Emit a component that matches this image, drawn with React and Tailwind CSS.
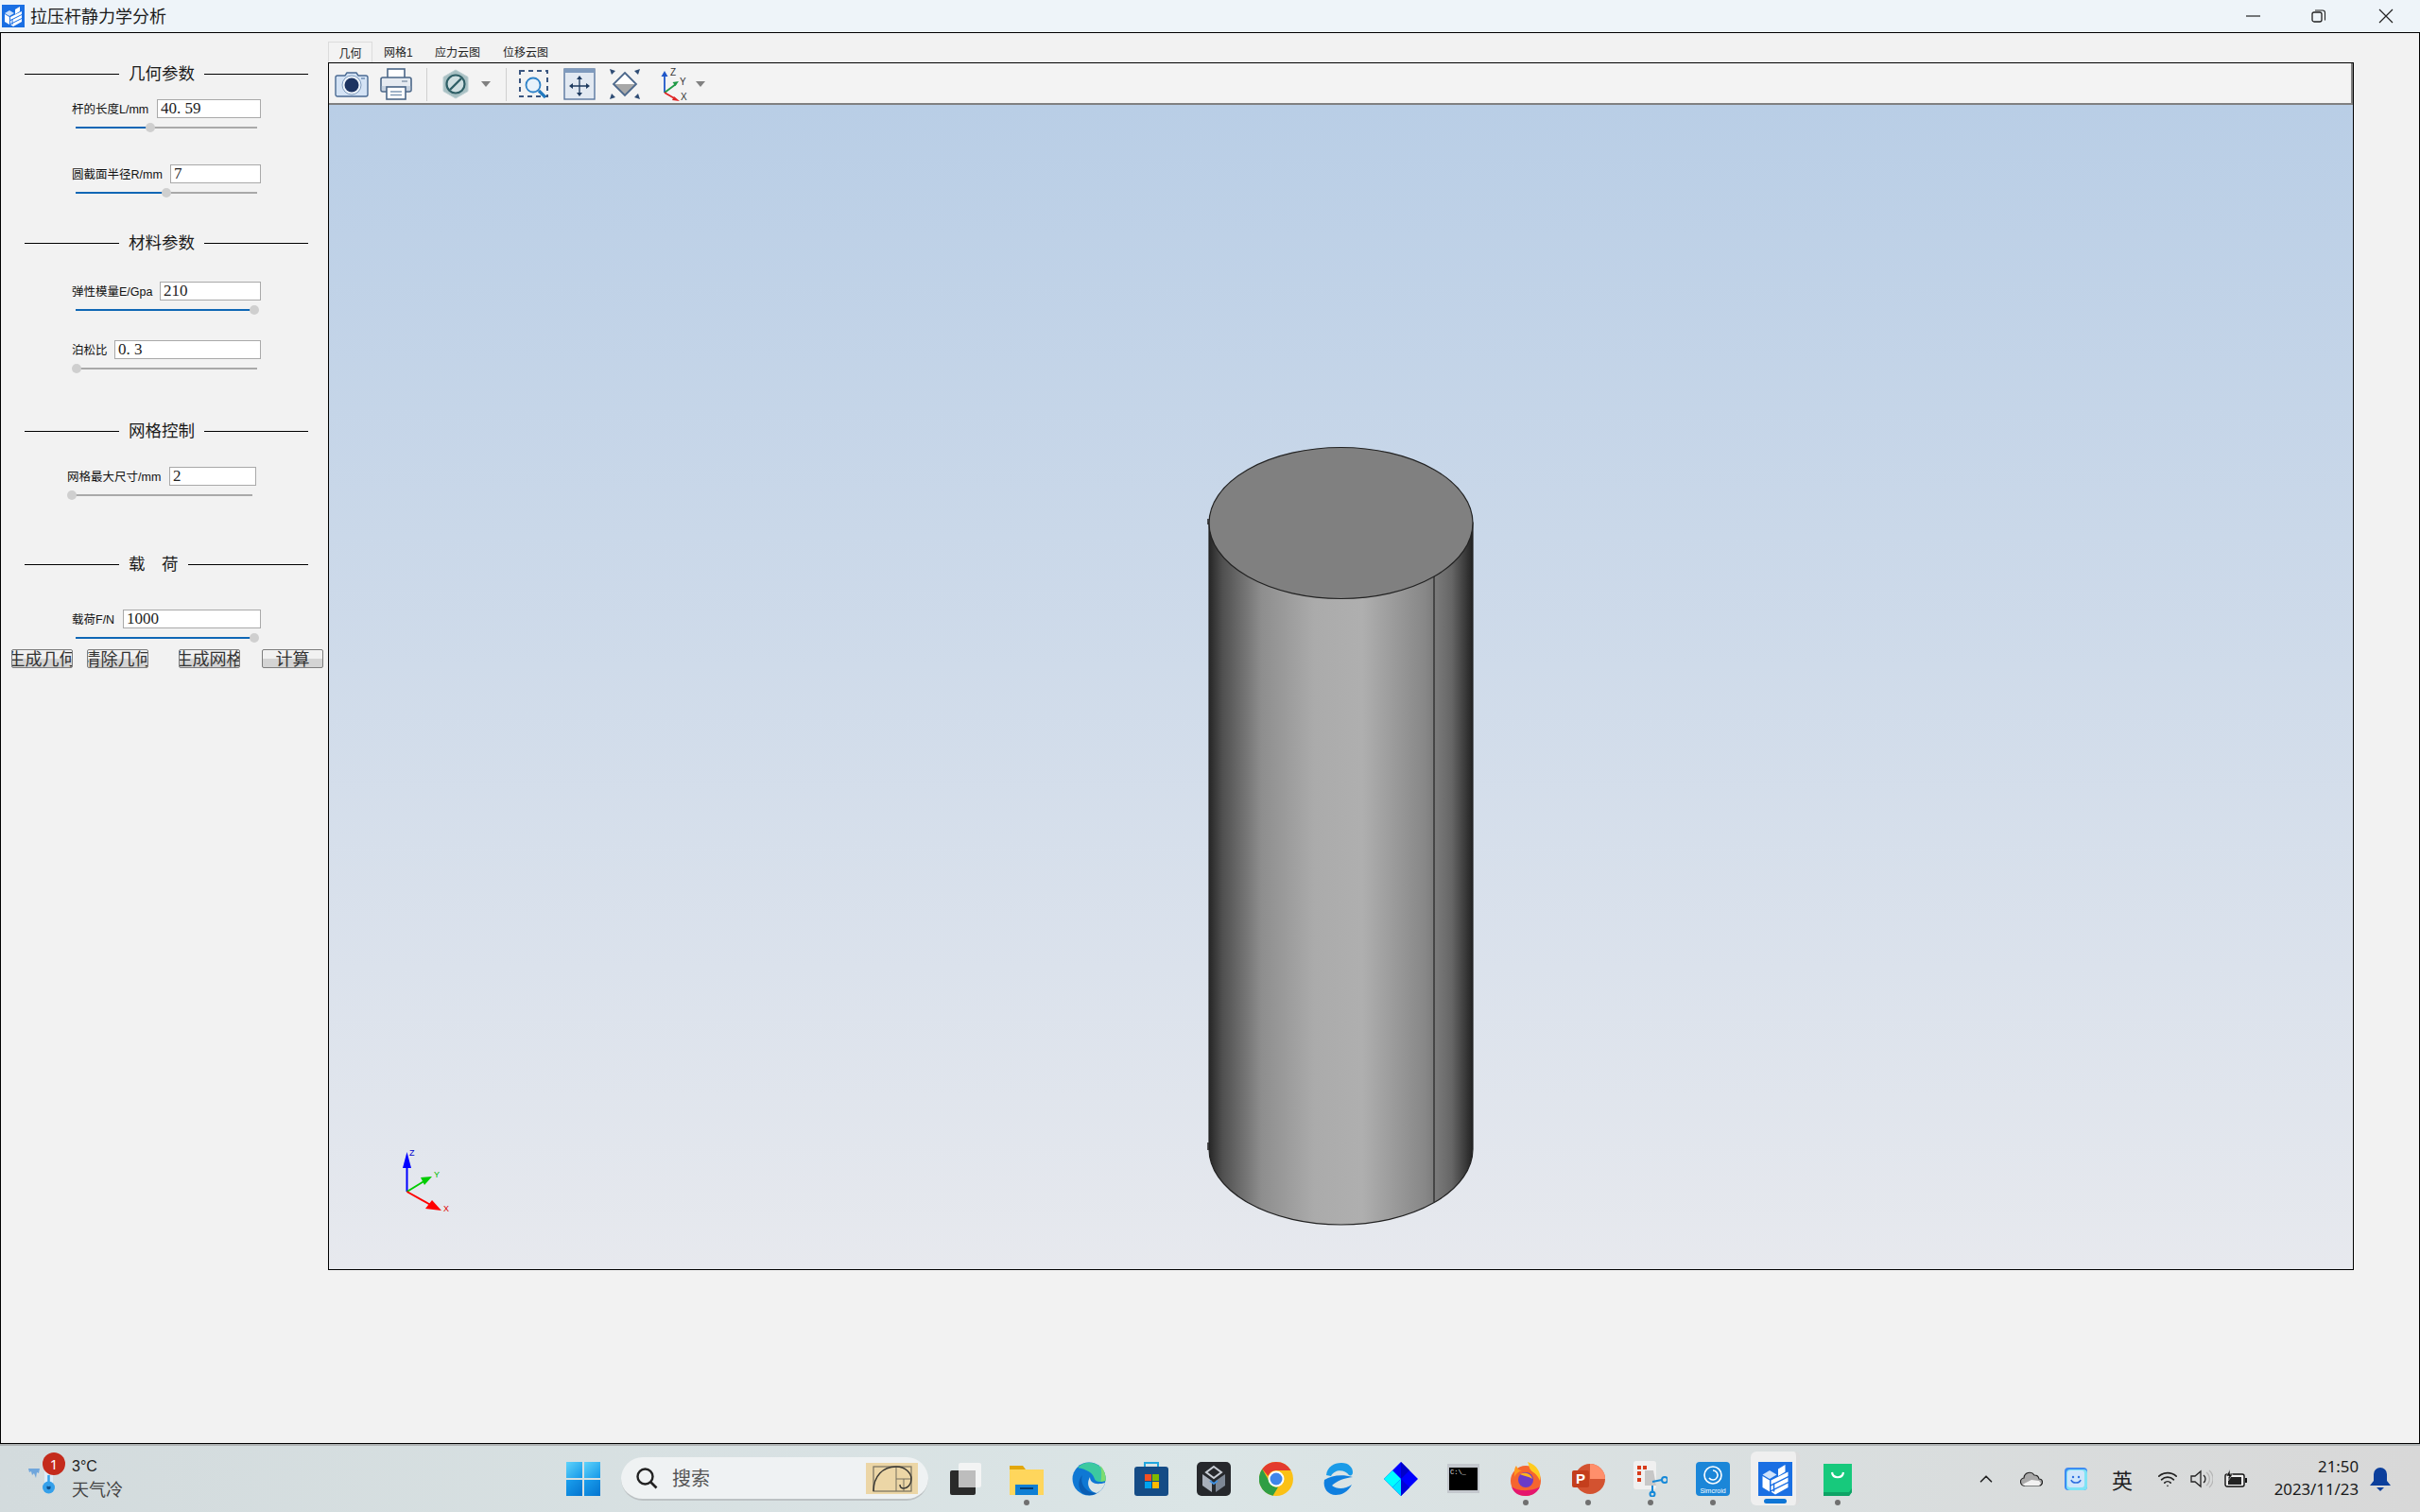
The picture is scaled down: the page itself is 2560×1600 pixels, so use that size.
import React from "react";
import { ChevronUp, Wifi } from "lucide-react";

const cjk = "font-['Noto_Sans_CJK_SC',sans-serif]";
const mixed = "font-['Liberation_Sans','Noto_Sans_CJK_SC',sans-serif]";

const params = [
  { heading: "几何参数", headingClass: "mt-[31px]" },
  { label: "杆的长度L/mm", value: "40. 59", rowClass: "mt-[15px] pl-[75px] pr-[71px]", inputClass: "w-[110px]", sliderClass: "pl-[79px]", percent: 41.1 },
  { label: "圆截面半径R/mm", value: "7", rowClass: "mt-[34px] pl-[75px] pr-[71px]", inputClass: "w-[96px]", sliderClass: "pl-[79px]", percent: 50 },
  { heading: "材料参数", headingClass: "mt-[36px]" },
  { label: "弹性模量E/Gpa", value: "210", rowClass: "mt-[29px] pl-[75px] pr-[71px]", inputClass: "w-[107px]", sliderClass: "pl-[79px]", percent: 98.4 },
  { label: "泊松比", value: "0. 3", rowClass: "mt-[27px] pl-[75px] pr-[71px]", inputClass: "w-[155px]", sliderClass: "pl-[79px]", percent: 0.5 },
  { heading: "网格控制", headingClass: "mt-[49px]" },
  { label: "网格最大尺寸/mm", value: "2", rowClass: "mt-[26px] pl-[70px] pr-[76px]", inputClass: "w-[92px]", sliderClass: "pl-[74px]", percent: 0.5 },
  { heading: "载　荷", headingClass: "mt-[56px]" },
  { label: "载荷F/N", value: "1000", rowClass: "mt-[36px] pl-[75px] pr-[71px]", inputClass: "w-[146px]", sliderClass: "pl-[79px]", percent: 98.4 },
];

const actions = [
  { text: "生成几何", className: "ml-[11px]" },
  { text: "清除几何", className: "ml-[15px]" },
  { text: "生成网格", className: "ml-[32px]" },
  { text: "计算", className: "ml-[23px]" },
];

const SectionHeading = ({ text, className }) => (
  <div className={`flex h-[24px] items-center gap-[10px] pl-[25px] pr-[21px] ${className}`}>
    <div className="h-px w-[100px] bg-black" />
    <span className={`${cjk} -mt-[2px] whitespace-pre text-[17.5px] leading-[24px] text-[#1a1a1a]`}>{text}</span>
    <div className="h-px flex-1 bg-black" />
  </div>
);

const ParamRow = ({ label, value, rowClass, inputClass, sliderClass, percent }) => (
  <>
    <div className={`flex h-[20px] items-center justify-between ${rowClass}`}>
      <span className={`${mixed} whitespace-nowrap pt-[2px] text-[12.5px] leading-[20px] text-[#111]`}>{label}</span>
      <input
        readOnly
        value={value}
        className={`h-[20px] border border-[#a9a9a9] bg-white pl-[3px] font-['Liberation_Serif',serif] text-[17px] text-[#222] outline-none ${inputClass}`}
      />
    </div>
    <div className={`mt-[5px] ${sliderClass}`}>
      <div className="relative h-[10px] w-[192px]">
        <div className="absolute left-0 right-0 top-[4px] h-[2px] bg-[#a9a9a9]" />
        <div className="absolute left-0 top-[4px] h-[2px] bg-[#0f67b5]" style={{ width: `${percent}%` }} />
        <div
          className="absolute top-0 -ml-[5px] h-[10px] w-[10px] rounded-full bg-[#cfcfcf]"
          style={{ left: `${percent}%` }}
        />
      </div>
    </div>
  </>
);

const Sidebar = () => (
  <div className="w-[346px] shrink-0">
    {params.map((item) =>
      item.heading ? (
        <SectionHeading key={item.heading} text={item.heading} className={item.headingClass} />
      ) : (
        <ParamRow key={item.label} {...item} />
      )
    )}
    <div className="mt-[7px] flex">
      {actions.map((btn) => (
        <button
          key={btn.text}
          className={`${cjk} flex h-[20px] w-[65px] justify-center overflow-hidden whitespace-nowrap rounded-[2px] border border-[#7d7d7d] bg-linear-to-b from-[#f1f1f1] from-50% to-[#d4d4d4] to-50% text-[18px] leading-[16px] text-[#333] ${btn.className}`}
        >
          {btn.text}
        </button>
      ))}
    </div>
  </div>
);

const AppLogo = ({ className }) => (
  <svg viewBox="0 0 24 24" className={className}>
    <rect width="24" height="24" fill="#1a6fe3" />
    <path d="M3 9l5-3 5 3-5 3z" fill="#cfe2fb" />
    <path d="M14 5l5-3v5l-5 3z" fill="#fff" />
    <path d="M3 10l5 3v8l-5-3z" fill="#fff" />
    <path d="M9 13l12-6v3L9 16zM9 17l12-6v3L9 20zM9 21l12-6v3l-9 5z" fill="#fff" />
    <path d="M11 15v6" stroke="#1a6fe3" strokeWidth="1" />
  </svg>
);

const TitleBar = () => (
  <div className="flex h-[34px] shrink-0 items-center bg-[#eef4f9]">
    <AppLogo className="ml-[2px] h-[24px] w-[24px]" />
    <span className={`${cjk} ml-[6px] -mt-[2px] text-[18px] leading-[34px] text-[#1a1a1a]`}>拉压杆静力学分析</span>
    <div className="ml-auto flex items-center">
      <svg viewBox="0 0 16 16" className="h-[16px] w-[16px]">
        <path d="M0 8h15" stroke="#222" strokeWidth="1.2" />
      </svg>
      <svg viewBox="0 0 16 16" className="ml-[53px] h-[16px] w-[16px]">
        <rect x="1" y="4" width="10" height="10" rx="2" fill="none" stroke="#222" strokeWidth="1.3" />
        <path d="M4 2h8a2.5 2.5 0 0 1 2.5 2.500v8" fill="none" stroke="#222" strokeWidth="1.1" />
      </svg>
      <svg viewBox="0 0 16 16" className="ml-[55px] mr-[28px] h-[16px] w-[16px]">
        <path d="M1 1l14 14M15 1L1 15" stroke="#222" strokeWidth="1.2" />
      </svg>
    </div>
  </div>
);

const tabs = [
  { text: "几何", className: "w-[47px] border border-b-0 border-[#dcdcdc] bg-[#f3f3f3]" },
  { text: "网格1", className: "ml-[12px] w-[30px]" },
  { text: "应力云图", className: "ml-[24px] w-[48px]" },
  { text: "位移云图", className: "ml-[24px] w-[48px]" },
];

const Tabs = () => (
  <div className="flex h-[22px] shrink-0">
    {tabs.map((tab) => (
      <div key={tab.text} className={`${mixed} whitespace-nowrap pt-[3px] text-center text-[12px] leading-[18px] text-[#222] ${tab.className}`}>
        {tab.text}
      </div>
    ))}
  </div>
);

const ToolIcon = ({ className = "w-[48px]", children }) => (
  <div className={`flex h-full items-center justify-center ${className}`}>{children}</div>
);

const Caret = ({ className }) => (
  <div className={`flex h-full w-[16px] items-center justify-center ${className}`}>
    <svg viewBox="0 0 10 6" className="h-[6px] w-[10px]">
      <path d="M0 0h10L5 6z" fill="#808080" />
    </svg>
  </div>
);

const Separator = ({ className }) => <div className={`h-[35px] w-px self-center bg-[#cfcfcf] ${className}`} />;

const Toolbar = () => (
  <div className="flex h-[44px] shrink-0 border-b-2 border-r-2 border-[#808080] bg-[#f3f3f3] pt-[2px]">
    <ToolIcon className="w-[47px]">
      <svg viewBox="0 0 36 30" className="h-[30px] w-[36px]">
        <path d="M3 6h8l2-3h10l2 3h8a2 2 0 0 1 2 2v18a2 2 0 0 1-2 2H3a2 2 0 0 1-2-2V8a2 2 0 0 1 2-2z" fill="#d4e3f5" stroke="#4a6a92" strokeWidth="1.4" />
        <circle cx="18" cy="16" r="10" fill="#eef4fb" stroke="#7f9bbd" />
        <circle cx="18" cy="16" r="7.500" fill="#1d3461" />
        <rect x="28" y="8" width="4" height="2" fill="#8aa4c4" />
      </svg>
    </ToolIcon>
    <ToolIcon>
      <svg viewBox="0 0 34 34" className="h-[34px] w-[34px]">
        <rect x="8" y="1" width="18" height="10" fill="#fff" stroke="#4a6687" strokeWidth="1.600" />
        <rect x="1" y="10" width="32" height="15" rx="2" fill="#e6ebf1" stroke="#4a6687" strokeWidth="1.600" />
        <rect x="1.800" y="19" width="30.400" height="5" fill="#c6d2df" />
        <rect x="7" y="20" width="20" height="13" fill="#fff" stroke="#4a6687" strokeWidth="1.600" />
        <path d="M11 25h12M11 28.500h12" stroke="#7f99b5" strokeWidth="1.400" />
        <path d="M23 14h6" stroke="#8a9bae" strokeWidth="1.500" />
      </svg>
    </ToolIcon>
    <Separator className="ml-[8px]" />
    <ToolIcon className="ml-[6px] w-[48px]">
      <svg viewBox="0 0 30 32" className="h-[32px] w-[30px]">
        <path d="M15 1l13 7.500v15L15 31 2 23.500v-15z" fill="#a8c0c3" stroke="#bccfd2" />
        <circle cx="15" cy="16" r="9.500" fill="#cfdfe1" stroke="#2f5f66" strokeWidth="2.200" />
        <path d="M9 22L21 10" stroke="#2f5f66" strokeWidth="2.400" />
      </svg>
    </ToolIcon>
    <Caret />
    <Separator className="ml-[13px]" />
    <ToolIcon className="ml-[5px] w-[48px]">
      <svg viewBox="0 0 34 32" className="h-[32px] w-[34px]">
        <rect x="2" y="2" width="29" height="27" fill="none" stroke="#3a5680" strokeWidth="2" strokeDasharray="5 4" />
        <circle cx="16" cy="17" r="7.500" fill="#e8f2fb" stroke="#2f83c9" strokeWidth="1.800" />
        <path d="M22 23l7 7" stroke="#2279bf" strokeWidth="3.200" />
      </svg>
    </ToolIcon>
    <ToolIcon>
      <svg viewBox="0 0 34 34" className="h-[34px] w-[34px]">
        <rect x="1" y="1" width="32" height="32" fill="#e2e9f2" stroke="#5a77a0" strokeWidth="1.400" />
        <rect x="1" y="1" width="32" height="4" fill="#7e9abd" />
        <path d="M17 12v14M10 19h14" stroke="#1e3a5f" strokeWidth="1.300" />
        <path d="M17 8l-3 4h6zM17 30l-3-4h6zM6 19l4-3v6zM28 19l-4-3v6z" fill="#1e3a5f" />
      </svg>
    </ToolIcon>
    <ToolIcon>
      <svg viewBox="0 0 34 34" className="h-[34px] w-[34px]">
        <path d="M17 5l12 12-12 12L5 17z" fill="#fff" />
        <path d="M5 17h24L17 29z" fill="#a8a8a8" />
        <path d="M17 5l12 12-12 12L5 17z" fill="none" stroke="#4c688c" strokeWidth="1.800" />
        <path d="M1 1l6 2-4 4zM33 1l-6 2 4 4zM1 33l6-2-4-4zM33 33l-6-2 4-4z" fill="#2f4c74" />
      </svg>
    </ToolIcon>
    <ToolIcon className="ml-[2px] w-[48px]">
      <svg viewBox="0 0 34 36" className="h-[36px] w-[34px]">
        <path d="M9 27V8" stroke="#1f57c9" strokeWidth="1.800" />
        <path d="M9 4l-3.500 6h7z" fill="#1f57c9" />
        <path d="M9 27l12-9" stroke="#1f9a45" strokeWidth="1.800" />
        <path d="M24 15l-6.500 1 3 4z" fill="#1f9a45" />
        <path d="M9 27l12 7" stroke="#e02525" strokeWidth="1.800" />
        <path d="M25 36l-6-5-2 4z" fill="#e02525" />
        <text x="15" y="9" fontSize="10" fontFamily="Liberation Sans" fill="#333">Z</text>
        <text x="25" y="19" fontSize="10" fontFamily="Liberation Sans" fill="#333">Y</text>
        <text x="26" y="35" fontSize="10" fontFamily="Liberation Sans" fill="#333">X</text>
      </svg>
    </ToolIcon>
    <Caret className="-ml-[2px]" />
  </div>
);

// 3D scene, coordinates are page pixels
const Scene = () => (
  <svg viewBox="348 111 2141 1232" className="absolute inset-0 h-full w-full">
    <defs>
      <linearGradient id="shaft" x1="0" x2="1" y1="0" y2="0">
        <stop offset="0" stopColor="#262626" />
        <stop offset="0.05" stopColor="#4f4f4f" />
        <stop offset="0.2" stopColor="#8e8e8e" />
        <stop offset="0.4" stopColor="#ababab" />
        <stop offset="0.58" stopColor="#afafaf" />
        <stop offset="0.82" stopColor="#878787" />
        <stop offset="0.92" stopColor="#666" />
        <stop offset="0.98" stopColor="#333" />
        <stop offset="1" stopColor="#222" />
      </linearGradient>
    </defs>
    <path d="M1279 553V1216A139.500 80 0 0 0 1558 1216V553z" fill="url(#shaft)" stroke="#222" strokeWidth="1.200" />
    <path d="M1517 610V1272" stroke="#222" strokeWidth="1.200" />
    <ellipse cx="1418.500" cy="553.500" rx="139.500" ry="80" fill="#808080" stroke="#222" strokeWidth="1.200" />
    <path d="M1278 549v6M1278 1209v8" stroke="#222" strokeWidth="1.500" />

    <path d="M430.500 1261V1234" stroke="#0000ff" strokeWidth="2" />
    <path d="M430.500 1219l-4.500 17h9z" fill="#0000ff" />
    <text x="433" y="1223" fontSize="9" fontFamily="Liberation Sans" fill="#0000cc">Z</text>
    <path d="M430.500 1261l18-11" stroke="#00cc00" strokeWidth="2" />
    <path d="M457 1245l-12 1 4 8z" fill="#00cc00" />
    <text x="459" y="1246" fontSize="9" fontFamily="Liberation Sans" fill="#00bb00">Y</text>
    <path d="M430.500 1261l25 14" stroke="#ff0000" strokeWidth="2" />
    <path d="M467 1281l-10-11-7 9z" fill="#ff0000" />
    <text x="469" y="1282" fontSize="9" fontFamily="Liberation Sans" fill="#dd0000">X</text>
  </svg>
);

const Viewer = () => (
  <div className="mt-[9px] flex w-[2143px] shrink-0 flex-col">
    <Tabs />
    <div className="flex h-[1278px] flex-col border border-black">
      <Toolbar />
      <div className="relative flex-1 bg-linear-to-b from-[#b9cee6] to-[#e7e9ee]">
        <Scene />
      </div>
    </div>
  </div>
);

const TaskIcon = ({ dot, active, children }) => (
  <div className="relative flex h-full w-[66px] shrink-0 items-center justify-center">
    {active && (
      <div className="absolute left-[7px] top-[6px] h-[57px] w-[52px] rounded-[6px] border-r-4 border-[#dcdcdc] bg-[#efefef]" />
    )}
    <div className="relative flex h-[36px] w-[36px] items-center justify-center">{children}</div>
    {dot && <div className="absolute left-[30px] top-[57px] h-[6px] w-[6px] rounded-full bg-[#707070]" />}
    {active && <div className="absolute left-[21px] top-[56px] h-[5px] w-[24px] rounded-full bg-[#0f76d6]" />}
  </div>
);

const FolderIcon = () => (
  <svg viewBox="0 0 36 36" className="h-[36px] w-[36px]">
    <path d="M0 4h14l3 4h19v26H0z" fill="#e2a70c" />
    <path d="M0 8h36v27H0z" fill="#ffd65c" />
    <path d="M6 24h24v11H6z" fill="#0f7fd4" />
    <path d="M11 28h14" stroke="#063d70" strokeWidth="2" />
  </svg>
);

const EdgeIcon = () => (
  <svg viewBox="0 0 36 36" className="h-[36px] w-[36px]">
    <circle cx="18" cy="18" r="17.500" fill="#0f78d4" />
    <path d="M6 6C12 -1 24 -1 31 6c4 4 5 9 4.500 14-7 2-11 1-12-3C21 9 10 7 6 6z" fill="#3cc9a0" />
    <path d="M30 4c4 4 6 10 5.500 16l-5 1c1-7 1-12-.500-17z" fill="#7ddc6f" />
    <path d="M19 16c0 6 6 9 16 6-1 4-4 9-9 11-6-1-12-8-7-17z" fill="#dbe5e6" />
    <path d="M11 14c-3 8 3 19 15 19-5 3-10 3-15 0-5-5-5-14 0-19z" fill="#0a5db3" />
  </svg>
);

const StoreIcon = () => (
  <svg viewBox="0 0 36 36" className="h-[36px] w-[36px]">
    <path d="M11 6V1h14v5" fill="none" stroke="#22a7e0" strokeWidth="2" />
    <rect y="5" width="36" height="31" rx="3" fill="#154c86" />
    <rect x="11" y="13" width="7" height="7" fill="#f25022" />
    <rect x="19" y="13" width="7" height="7" fill="#7fba00" />
    <rect x="11" y="21" width="7" height="7" fill="#00a4ef" />
    <rect x="19" y="21" width="7" height="7" fill="#ffb900" />
  </svg>
);

const CubeIcon = () => (
  <svg viewBox="0 0 36 36" className="h-[36px] w-[36px]">
    <rect width="36" height="36" rx="5" fill="#26282c" />
    <path d="M18 5l8 6-8 6-8-6z" fill="none" stroke="#c9ced6" strokeWidth="2" />
    <path d="M6 13l10 7v12l-10-7z" fill="#a9b0bb" />
    <path d="M30 13l-10 7v12l10-7z" fill="#7d8795" />
    <path d="M14 20l4 3 4-3" stroke="#3f8fe0" strokeWidth="2" fill="none" />
  </svg>
);

const ChromeIcon = () => (
  <svg viewBox="0 0 36 36" className="h-[36px] w-[36px]">
    <circle cx="18" cy="18" r="18" fill="#fbc116" />
    <path d="M18 0a18 18 0 0 1 15.600 9H18a9 9 0 0 0-8.500 6L3.200 7.500A18 18 0 0 1 18 0z" fill="#e33b2e" />
    <path d="M3.200 7.500L11 21a9 9 0 0 0 9 5.800L14.500 35.700A18 18 0 0 1 3.200 7.500z" fill="#2f9e44" />
    <circle cx="18" cy="18" r="8.500" fill="#fff" />
    <circle cx="18" cy="18" r="6.500" fill="#3f86ea" />
  </svg>
);

const SwirlIcon = () => (
  <svg viewBox="0 0 36 36" className="h-[36px] w-[36px]">
    <path d="M5 14C6 5 13 1 21 1c8 0 12 5 12 10 0 3-2 4-4 3C25 8 14 7 10 15z" fill="#1a9be8" />
    <path d="M3 19c8-5 19-6 30-3-9 1-17 4-22 9 5 4 14 4 21-1-4 8-11 11-17 11C7 35 1 28 3 19z" fill="#0f7fdf" />
  </svg>
);

const DiamondIcon = () => (
  <svg viewBox="0 0 36 36" className="h-[36px] w-[36px]">
    <path d="M18 0l18 18-18 18L0 18z" fill="#0000ff" />
    <path d="M9 9l-9 9 9 9 9-9z" fill="#00ffff" />
    <path d="M18 0l9 9-9 9z" fill="#0000c8" />
    <path d="M18 18l-9 9 9 9z" fill="#00e5ff" />
    <path d="M18 18l9 9-9 9z" fill="#0000d8" />
  </svg>
);

const CmdIcon = () => (
  <svg viewBox="0 0 36 36" className="h-[36px] w-[36px]">
    <rect x="1" y="2" width="34" height="31" fill="#c4c8ce" />
    <rect x="3" y="6" width="30" height="24" fill="#000" />
    <text x="4" y="13" fontSize="7" fontFamily="Liberation Mono" fill="#e8e8e8">C:\_</text>
  </svg>
);

const FirefoxIcon = () => (
  <svg viewBox="0 0 36 36" className="h-[36px] w-[36px]">
    <circle cx="18" cy="20" r="16" fill="#f5652f" />
    <path d="M3 26c2 7 8 10 15 10s13-4 15-10c-6 5-24 6-30 0z" fill="#e5166e" />
    <path d="M20 0c2 4 1 8 6 11 5 3 7 9 7 9 2-8-3-17-13-20z" fill="#ffcb1f" />
    <path d="M6 10c0-4 2-6 2-6 1 3 3 5 6 5-6 2-8 7-8 7z" fill="#ff9a1f" />
    <circle cx="18" cy="19" r="8" fill="#6a3bc8" />
    <path d="M12 13c6-3 12 0 13 5-4-3-9-3-13-5z" fill="#ffb31f" />
  </svg>
);

const PowerPointIcon = () => (
  <svg viewBox="0 0 36 36" className="h-[36px] w-[36px]">
    <circle cx="20" cy="18" r="16" fill="#d35230" />
    <path d="M20 2a16 16 0 0 1 16 16H20z" fill="#ff8f6b" />
    <rect x="1" y="9" width="18" height="18" rx="2" fill="#c43e1c" />
    <text x="5" y="23" fontSize="15" fontWeight="bold" fontFamily="Liberation Sans" fill="#fff">P</text>
  </svg>
);

const SnipIcon = () => (
  <svg viewBox="0 0 36 38" className="h-[38px] w-[36px]">
    <rect x="0" y="0" width="24" height="30" rx="3" fill="#f0f0f0" />
    <path d="M4 5h4v4H4zM10 5h4v4h-4zM4 11h4v4H4zM4 18h4v4H4z" fill="#d83b1a" />
    <path d="M12 10h9l3 16h-12z" fill="#c7c7c7" />
    <path d="M20 22l10-2M20 26v8" stroke="#1689d8" strokeWidth="2" />
    <circle cx="33" cy="20" r="3" fill="none" stroke="#1689d8" strokeWidth="2" />
    <circle cx="20" cy="35" r="2.500" fill="none" stroke="#1689d8" strokeWidth="2" />
  </svg>
);

const SimIcon = () => (
  <svg viewBox="0 0 36 36" className="h-[36px] w-[36px]">
    <rect width="36" height="36" rx="4" fill="#1b86d8" />
    <circle cx="18" cy="14" r="9" fill="none" stroke="#fff" strokeWidth="1.600" />
    <path d="M18 9a5 5 0 1 1-4 8" fill="none" stroke="#fff" strokeWidth="1.600" />
    <text x="18" y="33" fontSize="7" textAnchor="middle" fontFamily="Liberation Sans" fill="#fff">Simcroid</text>
  </svg>
);

const GreenIcon = () => (
  <svg viewBox="0 0 36 36" className="h-[36px] w-[36px]">
    <path d="M3 2h30v30l-3 4H3z" fill="#17c97c" />
    <path d="M3 32h27l3-4v4l-3 4H3z" fill="#0ea365" />
    <path d="M12 11c1 7 11 7 12 0" fill="none" stroke="#fff" strokeWidth="2.200" />
  </svg>
);

const WindowsLogo = () => (
  <svg viewBox="0 0 36 36" className="h-[36px] w-[36px]">
    <defs>
      <linearGradient id="winTop" x1="0" x2="1" y1="0" y2="1">
        <stop offset="0" stopColor="#5fd3fb" />
        <stop offset="1" stopColor="#1498e8" />
      </linearGradient>
      <linearGradient id="winBottom" x1="0" x2="1" y1="0" y2="1">
        <stop offset="0" stopColor="#1aa0ee" />
        <stop offset="1" stopColor="#0474cf" />
      </linearGradient>
    </defs>
    <rect width="17" height="17" fill="url(#winTop)" />
    <rect x="19" width="17" height="17" fill="url(#winTop)" />
    <rect y="19" width="17" height="17" fill="url(#winBottom)" />
    <rect x="19" y="19" width="17" height="17" fill="url(#winBottom)" />
  </svg>
);

const TaskView = () => (
  <svg viewBox="0 0 36 36" className="h-[36px] w-[36px]">
    <rect x="3" y="9" width="27" height="26" rx="2" fill="#2a2a2a" />
    <rect x="12" y="1" width="24" height="26" rx="2" fill="#f5f5f5" fillOpacity="0.9" />
    <rect x="12" y="9" width="18" height="18" fill="#bdbdbd" />
  </svg>
);

const taskIcons = [
  { id: "taskview", icon: <TaskView /> },
  { id: "folder", icon: <FolderIcon />, dot: true },
  { id: "edge", icon: <EdgeIcon /> },
  { id: "store", icon: <StoreIcon /> },
  { id: "cube", icon: <CubeIcon /> },
  { id: "chrome", icon: <ChromeIcon /> },
  { id: "swirl", icon: <SwirlIcon /> },
  { id: "diamond", icon: <DiamondIcon /> },
  { id: "cmd", icon: <CmdIcon /> },
  { id: "firefox", icon: <FirefoxIcon />, dot: true },
  { id: "ppt", icon: <PowerPointIcon />, dot: true },
  { id: "snip", icon: <SnipIcon />, dot: true },
  { id: "sim", icon: <SimIcon />, dot: true },
  { id: "app", icon: <AppLogo className="h-[36px] w-[36px]" />, active: true },
  { id: "green", icon: <GreenIcon />, dot: true },
];

const Weather = () => (
  <div className="relative flex h-full w-[584px] shrink-0 pl-[30px]">
    <svg viewBox="0 0 30 28" className="mt-[23px] h-[28px] w-[30px]">
      <path d="M0 1h12l-1 5-2-1-1 6-2-5-2 2-1-4-2 1z" fill="#6fa6dc" />
      <rect x="17" y="0" width="9" height="20" rx="4.500" fill="#dcecf8" />
      <circle cx="21.500" cy="21" r="6.500" fill="#35a0ea" />
      <circle cx="21.500" cy="21" r="2.200" fill="#0d4f8c" />
      <path d="M21.500 8v12" stroke="#35a0ea" strokeWidth="2.500" />
    </svg>
    <div className="absolute left-[45px] top-[7px] flex h-[24px] w-[24px] items-center justify-center rounded-full bg-[#c42b1c] font-['Noto_Sans',sans-serif] text-[15px] text-white">
      1
    </div>
    <div className={`${mixed} ml-[16px] mt-[12px] flex flex-col`}>
      <span className="text-[16px] leading-[20px] text-[#222]">3°C</span>
      <span className={`${cjk} mt-[1px] text-[18px] leading-[24px] text-[#444]`}>天气冷</span>
    </div>
  </div>
);

const SearchBox = () => (
  <div className="ml-[7px] flex h-[46px] w-[325px] shrink-0 items-center self-center rounded-full border-b-2 border-[#bcc1c3] bg-[#eff2f3]">
    <svg viewBox="0 0 24 24" className="ml-[15px] h-[24px] w-[24px]">
      <circle cx="10.500" cy="10.500" r="8" fill="none" stroke="#222" strokeWidth="2.400" />
      <path d="M16.500 16.500l6 6" stroke="#222" strokeWidth="2.600" />
    </svg>
    <span className={`${cjk} ml-[15px] text-[20px] text-[#555]`}>搜索</span>
    <svg viewBox="0 0 55 33" className="ml-auto mr-[11px] h-[33px] w-[55px]">
      <rect width="55" height="33" fill="#ecd6a6" />
      <rect x="8" y="4" width="40" height="26" fill="none" stroke="#77705f" strokeWidth="1.200" />
      <path d="M32 4v26M32 17h16M40 17v13" stroke="#77705f" strokeWidth="1" />
      <path d="M8 30C8 14 18 4 32 4c10 0 16 7 16 13 0 6-4 10-8 10-3 0-4-2-4-4" fill="none" stroke="#3c3a34" strokeWidth="1.500" />
    </svg>
  </div>
);

const Tray = () => (
  <div className="ml-[112px] flex h-full items-center">
    <div className="flex w-[24px] justify-center">
      <ChevronUp className="h-[22px] w-[22px] text-[#222]" strokeWidth={1.800} />
    </div>
    <svg viewBox="0 0 24 16" className="ml-[24px] h-[16px] w-[24px]">
      <path d="M5 15a4 4 0 0 1-1-8 6 6 0 0 1 11-3 5 5 0 0 1 5 4 3.500 3.500 0 0 1 0 7z" fill="#a9a9a9" stroke="#222" strokeWidth="1.200" />
      <path d="M2 14l10-5 8 1 2 3-2 2H5z" fill="#f2f2f2" />
    </svg>
    <svg viewBox="0 0 24 24" className="ml-[23px] h-[24px] w-[24px]">
      <rect width="24" height="24" rx="4" fill="#3d8bf2" />
      <rect x="2" y="2" width="22" height="22" rx="4" fill="#7fe3f5" />
      <rect x="3" y="3" width="18" height="18" rx="3" fill="#cfe6fb" />
      <circle cx="9" cy="10" r="1.200" fill="#2f6fe0" />
      <circle cx="15" cy="10" r="1.200" fill="#2f6fe0" />
      <path d="M7 13c1 4 9 4 10 0" fill="none" stroke="#2f6fe0" strokeWidth="1.600" />
    </svg>
    <span className={`${cjk} ml-[25px] w-[24px] text-center text-[22px] leading-[24px] text-[#222]`}>英</span>
    <div className="ml-[24px] flex w-[24px] justify-center">
      <Wifi className="h-[22px] w-[22px] text-[#222]" strokeWidth={1.800} />
    </div>
    <svg viewBox="0 0 24 20" className="ml-[12px] h-[20px] w-[24px]">
      <path d="M1 7h4l6-5v16l-6-5H1z" fill="none" stroke="#222" strokeWidth="1.300" />
      <path d="M14 6a5 5 0 0 1 0 8" fill="none" stroke="#222" strokeWidth="1.300" />
      <path d="M17 3a9 9 0 0 1 0 14M20 1a12 12 0 0 1 0 18" fill="none" stroke="#b5b5b5" strokeWidth="1.300" />
    </svg>
    <svg viewBox="0 0 24 20" className="ml-[12px] h-[20px] w-[24px]">
      <rect x="1" y="5" width="20" height="13" rx="2" fill="#f2f2f2" stroke="#111" strokeWidth="1.400" />
      <path d="M4 8h14v8H4z" fill="#222" />
      <rect x="22" y="9" width="2" height="5" fill="#111" />
      <path d="M6 0L2 7h3l-1 5 5-7H6z" fill="#111" stroke="#d8d8d8" strokeWidth="0.600" />
    </svg>
    <div className="-mt-[2px] ml-[18px] flex w-[100px] flex-col items-end font-['Noto_Sans',sans-serif] text-[16.8px] leading-[24px] text-[#1a1a1a]">
      <span>21:50</span>
      <span>2023/11/23</span>
    </div>
    <svg viewBox="0 0 24 26" className="ml-[11px] h-[26px] w-[24px]">
      <path d="M12 1a7 7 0 0 0-7 7v7l-4 5h22l-4-5V8a7 7 0 0 0-7-7z" fill="#0c3f9c" />
      <path d="M8 22h8l-4 4z" fill="#0c3f9c" />
    </svg>
  </div>
);

const Taskbar = () => (
  <div className="flex h-[72px] shrink-0 border-t-2 border-[#aeb2b3] bg-linear-to-r from-[#d3dbdd] via-[#dbe5e6] via-50% to-[#d8d8d8]">
    <Weather />
    <div className="flex h-full w-[66px] shrink-0 items-center justify-center">
      <WindowsLogo />
    </div>
    <SearchBox />
    <div className="ml-[5px] flex">
      {taskIcons.map((item) => (
        <TaskIcon key={item.id} dot={item.dot} active={item.active}>
          {item.icon}
        </TaskIcon>
      ))}
    </div>
    <Tray />
  </div>
);

export default function App() {
  return (
    <div className="flex h-screen w-screen flex-col overflow-hidden bg-[#f2f2f2]">
      <TitleBar />
      <div className="flex min-h-0 flex-1 border border-black bg-[#f2f2f2]">
        <Sidebar />
        <Viewer />
      </div>
      <Taskbar />
    </div>
  );
}
